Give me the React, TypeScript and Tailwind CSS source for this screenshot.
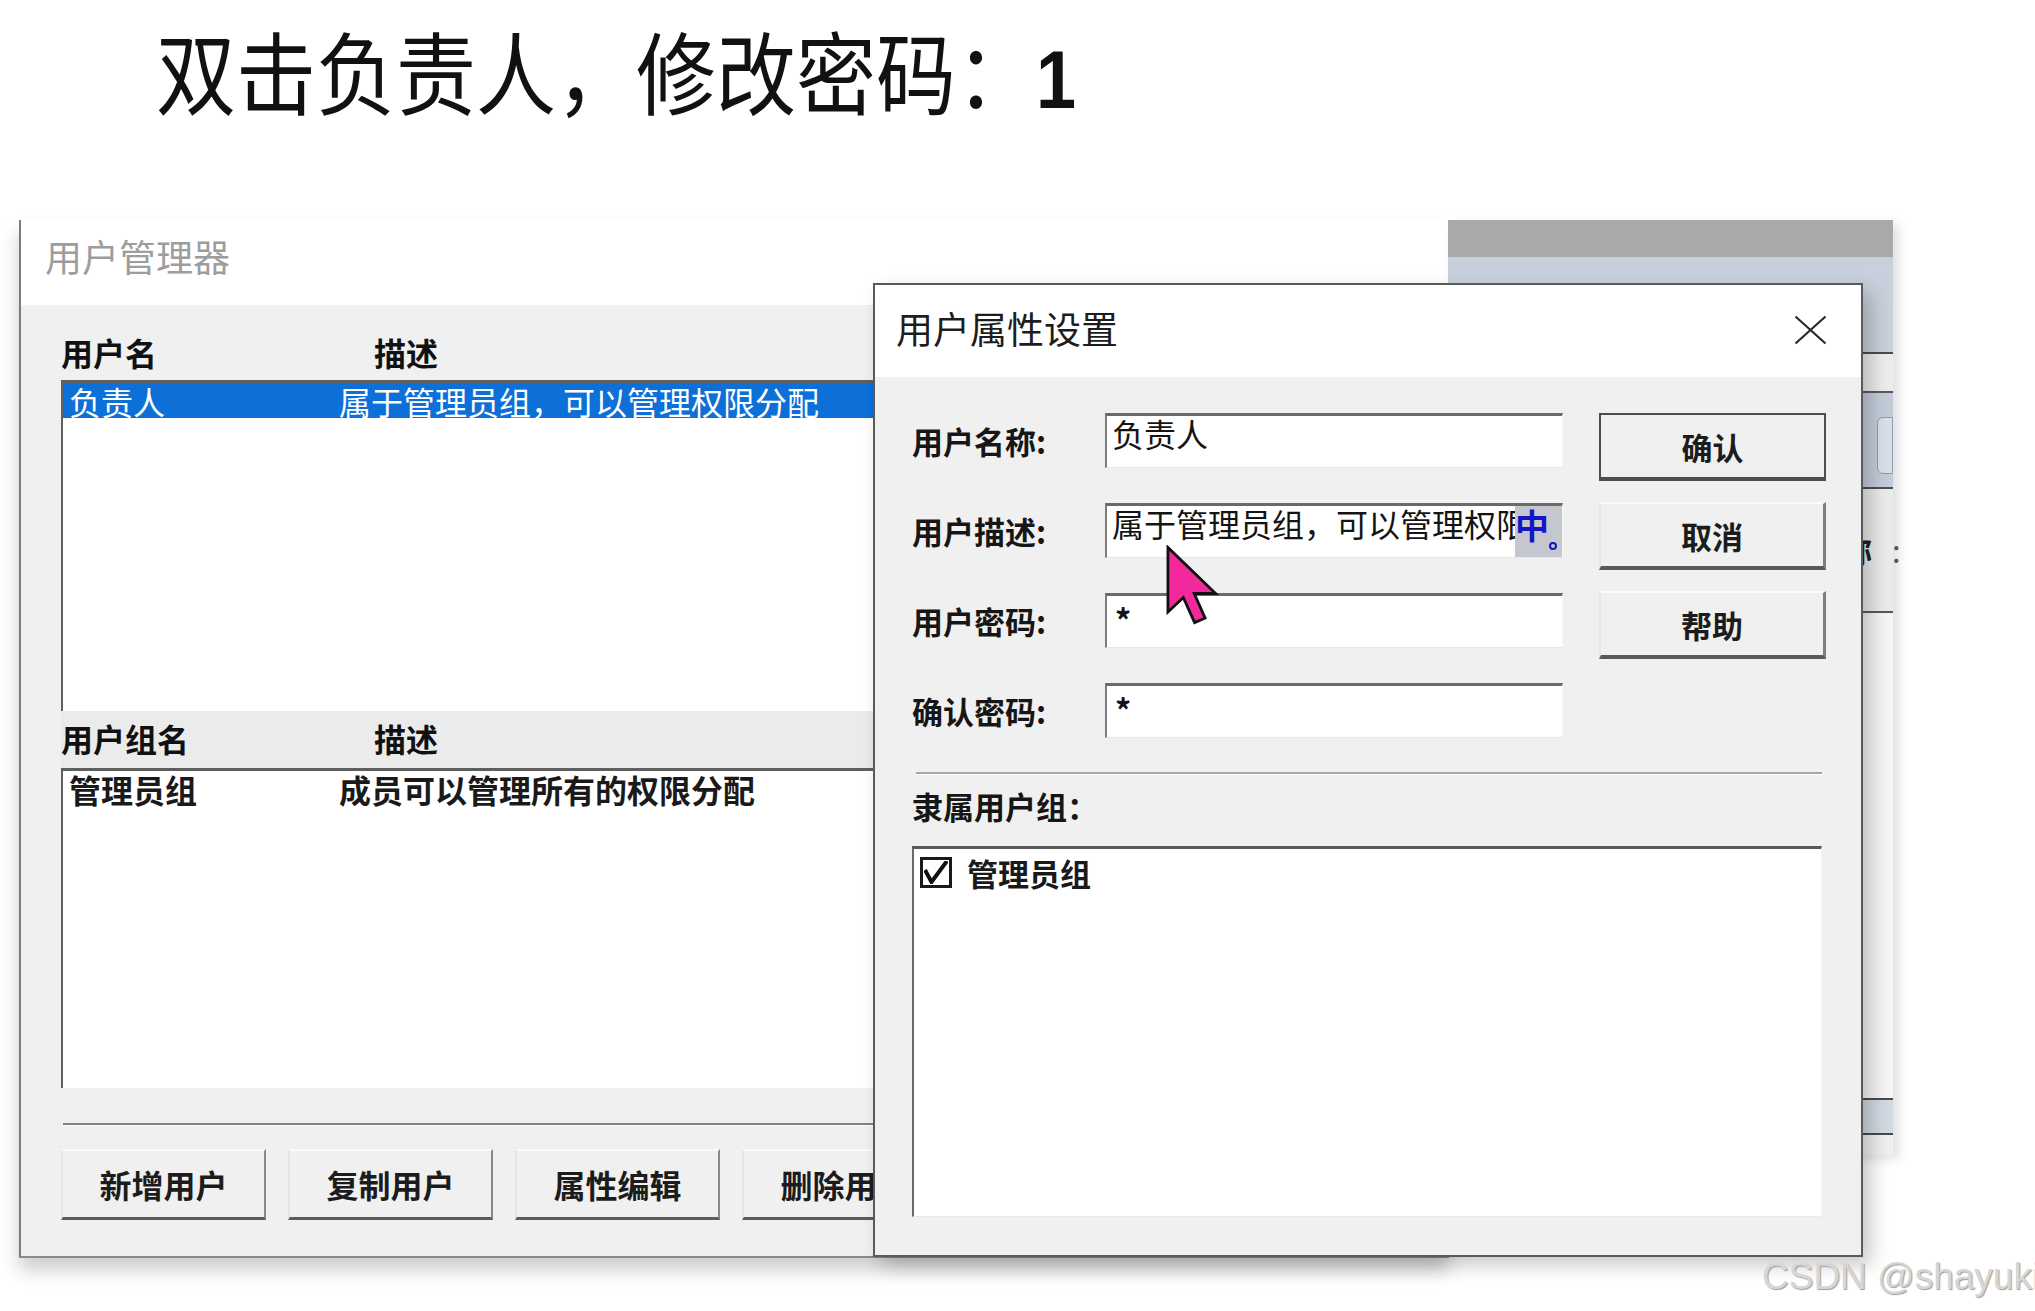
import React from "react";

const cjk = "font-['Noto_Sans_CJK_SC','Liberation_Sans',sans-serif]";

function MainButton({ label }: { label: string }) {
  return (
    <div className="flex h-[71px] w-[205px] shrink-0 items-center justify-center border-t-2 border-l-2 border-r-2 border-b-[3px] border-t-[#fbfbfb] border-l-[#e4e4e4] border-r-[#8a8a8a] border-b-[#5c5c5c] bg-[#f0f0f0] text-[32px] leading-[32px] font-bold text-[#1c1c1c] whitespace-nowrap">
      {label}
    </div>
  );
}

function DialogButton({ label, primary }: { label: string; primary?: boolean }) {
  return (
    <div
      className={
        primary
          ? "flex h-[68px] w-[227px] items-center justify-center border-2 border-b-[4px] border-[#4d4d4d] bg-[#f0f0f0] text-[31px] leading-[31px] font-bold text-[#1c1c1c]"
          : "flex h-[68px] w-[227px] items-center justify-center border-t-2 border-l-2 border-r-[3px] border-b-[4px] border-t-[#fbfbfb] border-l-[#e6e6e6] border-r-[#7d7d7d] border-b-[#5a5a5a] bg-[#f0f0f0] text-[31px] leading-[31px] font-bold text-[#1c1c1c]"
      }
    >
      {label}
    </div>
  );
}

function Field({ children }: { children?: React.ReactNode }) {
  return (
    <div className="relative h-[55px] w-[458px] overflow-hidden whitespace-nowrap border-t-[3px] border-l-2 border-r border-b border-t-[#6a6a6a] border-l-[#7d7d7d] border-r-[#f7f7f7] border-b-[#e6e6e6] bg-white pl-[5px] pt-[1px] text-[32px] leading-[32px] text-[#141414]">
      {children}
    </div>
  );
}

function FieldRow({ label, children }: { label: string; children?: React.ReactNode }) {
  return (
    <div className="flex h-[55px] items-center">
      <div className="w-[230px] pl-[37px] text-[31px] leading-[31px] font-bold text-[#161616]">{label}</div>
      <Field>{children}</Field>
    </div>
  );
}

function CloseIcon() {
  return (
    <svg width="33" height="30" viewBox="0 0 33 30" className="mt-[5px]">
      <path d="M1.5 1.5 L31.5 28.5 M31.5 1.5 L1.5 28.5" stroke="#2a2a2a" strokeWidth="2.2" fill="none" />
    </svg>
  );
}

function Cursor() {
  return (
    <svg
      className="absolute left-[1165px] top-[545px]"
      width="56"
      height="80"
      viewBox="-0.6 -0.6 13.6 19.8"
    >
      <path
        d="M0 0 L0 16 L3.8 12.4 L6.6 18.6 L9.2 17.5 L6.5 11.4 L11.8 11.4 Z"
        fill="#f2289c"
        stroke="#111"
        strokeWidth="0.7"
        strokeLinejoin="miter"
      />
    </svg>
  );
}

export default function App() {
  return (
    <div className={`relative h-[1311px] w-[2035px] overflow-hidden bg-white ${cjk}`}>
      {/* heading */}
      <div className="pl-[156px] pt-[29px]">
        <div className="origin-center scale-y-[1.12] text-[80px] leading-[80px] font-normal text-[#111] whitespace-nowrap">
          双击负责人，修改密码：
          <span className="font-['Liberation_Sans',sans-serif] text-[72px] font-bold">1</span>
        </div>
      </div>

      {/* 用户管理器 window */}
      <div className="absolute left-[19px] top-[220px] flex h-[1038px] w-[1430px] flex-col border-l-2 border-b-2 border-l-[#7b7b7b] border-b-[#8a8a8a] shadow-[0_12px_18px_rgba(0,0,0,0.2)]">
        <div className="h-[85px] shrink-0 bg-white pl-[24px] pt-[18px] text-[37px] leading-[37px] text-[#9d9d9d]">
          用户管理器
        </div>
        <div className="flex flex-1 flex-col bg-[#f0f0f0] pl-[40px] pr-[20px]">
          <div className="flex h-[75px] shrink-0 pt-[31px] text-[32px] leading-[32px] font-bold text-[#111]">
            <div className="w-[313px]">用户名</div>
            <div>描述</div>
          </div>
          <div className="h-[331px] shrink-0 border-t-[3px] border-l-2 border-[#5f5f5f] bg-white">
            <div className="flex h-[35px] items-center bg-[#0c70d8] text-[32px] leading-[32px] text-white whitespace-nowrap">
              <div className="w-[276px] pl-[6px]">负责人</div>
              <div>属于管理员组，可以管理权限分配</div>
            </div>
          </div>
          <div className="flex h-[57px] shrink-0 bg-[#ebebeb] pt-[11px] text-[32px] leading-[32px] font-bold text-[#111]">
            <div className="w-[313px]">用户组名</div>
            <div>描述</div>
          </div>
          <div className="h-[320px] shrink-0 border-t-[3px] border-l-2 border-[#5f5f5f] bg-white">
            <div className="flex h-[35px] items-center text-[32px] leading-[32px] font-bold text-[#1a1a1a] whitespace-nowrap">
              <div className="w-[276px] pl-[6px]">管理员组</div>
              <div>成员可以管理所有的权限分配</div>
            </div>
          </div>
          <div className="ml-[2px] mt-[35px] border-t-2 border-b border-t-[#808080] border-b-white" />
          <div className="mt-[23px] flex gap-[22px]">
            <MainButton label="新增用户" />
            <MainButton label="复制用户" />
            <MainButton label="属性编辑" />
            <MainButton label="删除用户" />
          </div>
        </div>
      </div>

      {/* window behind the dialog, right side */}
      <div className="absolute left-[1448px] top-[220px] flex w-[445px] flex-col shadow-[6px_4px_10px_rgba(0,0,0,0.12)]">
        <div className="h-[37px] bg-[#a9a9a9]" />
        <div className="h-[95px] bg-[#c7d0dc]" />
        <div className="h-[2px] bg-[#4c4c4c]" />
        <div className="h-[37px] bg-[#ececec]" />
        <div className="h-[2px] bg-[#5a5a5a]" />
        <div className="flex h-[94px] items-start bg-[#c3ccd9] pl-[429px] pt-[24px]">
          <div className="h-[57px] w-[24px] rounded-l-[6px] border border-[#8d9bb2] bg-[#d9e0ea]" />
        </div>
        <div className="h-[2px] bg-[#4f4f4f]" />
        <div className="flex h-[122px] items-start bg-[#ebebeb] pl-[393px] pt-[45px] text-[31px] leading-[31px] font-bold text-[#222]">
          <span>称</span>
          <span className="ml-[20px] font-normal text-[#555]">:</span>
        </div>
        <div className="h-[2px] bg-[#5a5a5a]" />
        <div className="h-[485px] bg-[#f5f5f5]" />
        <div className="h-[2px] bg-[#4a4a4a]" />
        <div className="h-[33px] bg-[#d2d9e3]" />
        <div className="h-[2px] bg-[#4a4a4a]" />
        <div className="h-[20px] bg-[#efefef]" />
      </div>

      {/* 用户属性设置 dialog */}
      <div className="absolute left-[873px] top-[283px] flex h-[974px] w-[990px] flex-col border-2 border-[#5a5a5a] shadow-[8px_8px_18px_rgba(0,0,0,0.22)]">
        <div className="flex h-[92px] shrink-0 items-start justify-between bg-white pl-[21px] pr-[34px] pt-[25px]">
          <div className="text-[37px] leading-[37px] text-[#1d1d1d]">用户属性设置</div>
          <CloseIcon />
        </div>
        <div className="flex flex-1 flex-col bg-[#f0f0f0] pt-[36px]">
          <div className="flex">
            <div className="flex flex-col gap-[35px]">
              <FieldRow label="用户名称:">负责人</FieldRow>
              <FieldRow label="用户描述:">
                <span>属于管理员组，可以管理权限分配</span>
                <div className="absolute right-0 top-0 bottom-0 flex w-[47px] items-start bg-[#c4c8ce] pt-[2px]">
                  <span className="text-[34px] leading-[34px] font-bold text-[#1414c8]">中</span>
                  <span className="mt-[34px] h-[8px] w-[8px] rounded-full border-2 border-[#1414c8]" />
                </div>
              </FieldRow>
              <FieldRow label="用户密码:">
                <span className="inline-block pt-[6px] pl-[3px] font-bold">*</span>
              </FieldRow>
              <FieldRow label="确认密码:">
                <span className="inline-block pt-[6px] pl-[3px] font-bold">*</span>
              </FieldRow>
            </div>
            <div className="ml-[36px] flex flex-col gap-[21px]">
              <DialogButton label="确认" primary />
              <DialogButton label="取消" />
              <DialogButton label="帮助" />
            </div>
          </div>
          <div className="ml-[41px] mr-[39px] mt-[34px] border-t-2 border-b border-t-[#a5a5a5] border-b-white" />
          <div className="mt-[15px] pl-[37px] text-[31px] leading-[31px] font-bold text-[#161616]">隶属用户组：</div>
          <div className="ml-[37px] mr-[39px] mt-[25px] h-[371px] border-t-[3px] border-l-2 border-r border-b border-t-[#5a5a5a] border-l-[#6a6a6a] border-r-[#f4f4f4] border-b-[#e8e8e8] bg-white">
            <div className="flex items-center gap-[15px] pl-[6px] pt-[8px]">
              <div className="flex h-[31px] w-[32px] items-center justify-center border-[3px] border-[#1a1a1a] bg-white">
                <svg width="24" height="23" viewBox="0 0 24 23">
                  <path d="M1 9 L7.5 21 L23 0" stroke="#111" strokeWidth="4" fill="none" />
                </svg>
              </div>
              <div className="text-[31px] leading-[31px] font-bold text-[#1a1a1a]">管理员组</div>
            </div>
          </div>
        </div>
      </div>

      <Cursor />

      {/* watermark */}
      <div className="absolute left-[1762px] top-[1258px] whitespace-nowrap font-['Liberation_Sans',sans-serif] text-[37px] leading-[37px] text-[#d6d6d6] [text-shadow:1px_1px_1px_#9c9c9c]">
        CSDN @shayuki
      </div>
    </div>
  );
}
